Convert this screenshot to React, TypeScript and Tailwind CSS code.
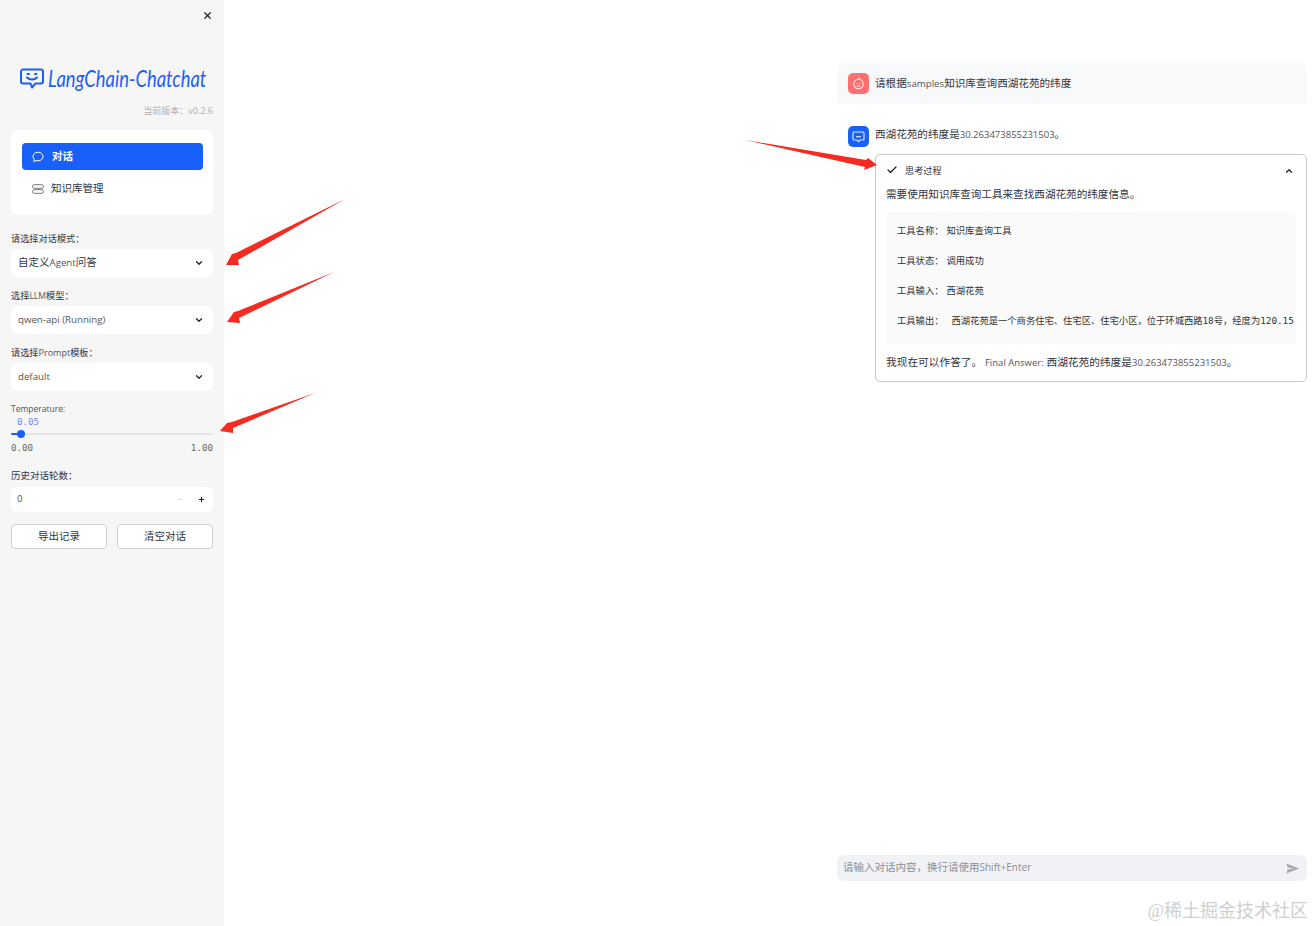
import React from "react";
import { X, Check, ChevronUp, ChevronDown, Plus, Minus } from "lucide-react";

const SANS = "font-['Open_Sans','Noto_Sans_CJK_SC',sans-serif]";
const MONO = "font-['DejaVu_Sans_Mono','Noto_Sans_CJK_SC',monospace]";

function Sel({ label, value, dark }: { label: React.ReactNode; value: React.ReactNode; dark?: boolean }) {
  return (
    <div className="flex flex-col">
      <div className="h-[20px] text-[9.2px] leading-[22px] text-[#31333f]">{label}</div>
      <div className="mt-[1px] flex h-[28px] items-center justify-between rounded-[6px] bg-white pl-[7px] pr-[9px]">
        <span className={dark ? "text-[10.5px] text-[#31333f]" : "text-[9.7px] text-[#555]"}>{value}</span>
        <ChevronDown size={10} strokeWidth={3} className="text-[#222]" />
      </div>
    </div>
  );
}

function ToolLine({ label, children, gap }: { label: string; children: React.ReactNode; gap: string }) {
  return (
    <div className="flex h-[30px] whitespace-pre text-[9.3px] leading-[30px] text-[#333]">
      <span>{label}</span>
      <span className={gap}>{children}</span>
    </div>
  );
}

const Lat = ({ children }: { children: React.ReactNode }) => <span className="text-[9.5px] text-[#555]">{children}</span>;

export default function App() {
  return (
    <div className={`relative flex h-[926px] w-[1313px] overflow-hidden bg-white ${SANS}`}>
      <aside className="flex w-[224px] shrink-0 flex-col bg-[#f6f6f7] px-[11px]">
        <div className="flex justify-end pt-[10px]">
          <X size={11} strokeWidth={2.6} className="text-[#222]" />
        </div>
        <div className="mt-[44px] flex items-center gap-[4px] pl-[9px]">
          <svg className="shrink-0" width="24" height="21" viewBox="0 0 24 21" fill="none" stroke="#1d5ff5" strokeWidth="2">
            <path d="M3 1.500h18a2 2 0 0 1 2 2v10a2 2 0 0 1-2 2h-5.500l-3.500 4-1.500-4H3a2 2 0 0 1-2-2v-10a2 2 0 0 1 2-2z" strokeLinejoin="round" />
            <path d="M7 9.500c2.500 2.500 7.500 2.500 10 0" strokeLinecap="round" />
            <path d="M7.500 6h1.500M15 6h1.500" strokeLinecap="round" />
          </svg>
          <span className="origin-center scale-y-125 whitespace-nowrap font-['Lato',sans-serif] text-[18.4px] italic leading-[26px] text-[#1d5ff5]">LangChain-Chatchat</span>
        </div>
        <div className="mt-[13px] text-right text-[9px] leading-[14px] text-[#b0b0b0]">当前版本：v0.2.6</div>
        <nav className="mt-[12px] flex h-[85px] flex-col rounded-[6px] bg-white pl-[11px] pr-[10px] pt-[13px]">
          <div className="flex h-[27px] items-center gap-[8px] rounded-[4px] bg-[#1960fa] pl-[10px] text-[10.5px] font-bold text-white">
            <svg width="12" height="12" viewBox="0 0 12 12" fill="none" stroke="white" strokeWidth="1">
              <path d="M6 1.200c2.800 0 5 1.900 5 4.300s-2.200 4.300-5 4.300c-.7 0-1.300-.1-1.900-.3L1.800 10.600l.5-2.300C1.500 7.500 1 6.600 1 5.500 1 3.100 3.200 1.200 6 1.200z" />
            </svg>
            <span className="pt-[1px]">对话</span>
          </div>
          <div className="mt-[5px] flex h-[27px] items-center gap-[7px] pl-[10px] text-[10.5px] text-[#31333f]">
            <svg width="12" height="10" viewBox="0 0 12 10" fill="none" stroke="#777" strokeWidth="1">
              <rect x="0.500" y="0.700" width="11" height="3.600" rx="1.800" />
              <rect x="0.500" y="5.700" width="11" height="3.600" rx="1.800" />
            </svg>
            <span className="pt-[1px]">知识库管理</span>
          </div>
        </nav>
        <div className="mt-[13px] flex flex-col gap-[8px]">
          <Sel label="请选择对话模式：" value={<>自定义<span className="text-[9.7px] text-[#555]">Agent</span>问答</>} dark />
          <Sel label={<>选择<span className="text-[8.6px] text-[#555]">LLM</span>模型：</>} value="qwen-api (Running)" />
          <Sel label={<>请选择<span className="text-[9px] text-[#555]">Prompt</span>模板：</>} value="default" />
        </div>
        <div className="mt-[11px] h-[14px] text-[8.5px] leading-[14px] text-[#555]">Temperature:</div>
        <div className={`h-[12px] pl-[6px] text-[9.2px] leading-[12px] text-[#6b8cf5] ${MONO}`}>0.05</div>
        <div className="relative mt-[2px] h-[8px]">
          <div className="absolute left-0 right-0 top-[3px] h-[2px] rounded bg-[#e6e6e8]" />
          <div className="absolute left-0 top-[3px] h-[2px] w-[10px] rounded bg-[#1960fa]" />
          <div className="absolute left-[6px] top-0 h-[8px] w-[8px] rounded-full bg-[#1960fa]" />
        </div>
        <div className={`mt-[3px] flex justify-between text-[9.2px] leading-[14px] text-[#666] ${MONO}`}>
          <span>0.00</span>
          <span>1.00</span>
        </div>
        <div className="mt-[14px] h-[14px] text-[9.5px] leading-[14px] text-[#31333f]">历史对话轮数：</div>
        <div className="mt-[4px] flex h-[25px] items-center justify-between rounded-[6px] bg-white pl-[6px] pr-[8px]">
          <span className="text-[9.5px] text-[#555]">0</span>
          <span className="flex items-center gap-[15px]">
            <Minus size={7} className="text-[#ccc]" />
            <Plus size={7} strokeWidth={4} className="text-[#222]" />
          </span>
        </div>
        <div className="mt-[12px] flex gap-[10px]">
          <button className="h-[25px] w-[96px] rounded-[4px] border border-[#cfcfcf] bg-white text-[10.5px] text-[#31333f]">导出记录</button>
          <button className="h-[25px] w-[96px] rounded-[4px] border border-[#cfcfcf] bg-white text-[10.5px] text-[#31333f]">清空对话</button>
        </div>
      </aside>

      <main className="flex flex-1 flex-col items-end pr-[6px]">
        <div className="flex h-[926px] w-[470px] flex-col">
          <div className="mt-[63px] flex h-[41px] items-center gap-[6px] rounded-[6px] bg-[#f8f9fb] pl-[11px]">
            <div className="flex h-[21px] w-[21px] items-center justify-center rounded-[5px] bg-[#ff6f6f]">
              <svg width="13" height="13" viewBox="0 0 13 13" fill="none" stroke="#ffe9e9" strokeWidth="1.100">
                <circle cx="6.500" cy="7" r="4.800" />
                <circle cx="5" cy="6.500" r="0.600" fill="#ffe9e9" stroke="none" />
                <circle cx="8" cy="6.500" r="0.600" fill="#ffe9e9" stroke="none" />
                <path d="M5 8.700c1 .8 2 .8 3 0M6.500 2.200c0-1 1-1.300 1.500-.8" />
              </svg>
            </div>
            <span className="text-[10.6px] text-[#31333f]">请根据<span className="text-[9.7px] text-[#555]">samples</span>知识库查询西湖花苑的纬度</span>
          </div>

          <div className="mt-[22px] flex gap-[6px] pl-[11px]">
            <div className="flex h-[21px] w-[21px] shrink-0 items-center justify-center rounded-[5px] bg-[#1960fa]">
              <svg width="13" height="12" viewBox="0 0 13 12" fill="none" stroke="#e6eeff" strokeWidth="1.100">
                <path d="M2 1h9a1 1 0 0 1 1 1v6a1 1 0 0 1-1 1H8L6.500 10.600 5 9H2a1 1 0 0 1-1-1V2a1 1 0 0 1 1-1z" />
                <path d="M4 5.700h5" />
              </svg>
            </div>
            <div className="flex min-w-0 flex-1 flex-col">
              <div className="h-[24px] pt-[1px] text-[10.6px] leading-[14px] text-[#31333f]">西湖花苑的纬度是<Lat>30.263473855231503</Lat>。</div>
              <div className="mt-[4px] h-[228px] rounded-[5px] border border-[#c8c8cc] px-[10px]">
                <div className="flex h-[31px] items-center justify-between pr-[2px]">
                  <span className="flex items-center gap-[7px] text-[9.2px] text-[#31333f]">
                    <Check size={12} strokeWidth={2.5} className="text-[#222]" />
                    思考过程
                  </span>
                  <ChevronUp size={10} strokeWidth={3} className="text-[#222]" />
                </div>
                <div className="h-[19px] text-[10.6px] leading-[16px] text-[#31333f]">需要使用知识库查询工具来查找西湖花苑的纬度信息。</div>
                <div className={`mt-[7px] h-[132px] overflow-hidden rounded-[4px] bg-[#fafafa] pl-[11px] pt-[4px] ${MONO}`}>
                  <ToolLine label="工具名称：" gap="ml-[3px]">知识库查询工具</ToolLine>
                  <ToolLine label="工具状态：" gap="ml-[3px]">调用成功</ToolLine>
                  <ToolLine label="工具输入：" gap="ml-[3px]">西湖花苑</ToolLine>
                  <ToolLine label="工具输出：" gap="ml-[8px]">西湖花苑是一个商务住宅、住宅区、住宅小区，位于环城西路18号，经度为120.15</ToolLine>
                </div>
                <div className="mt-[9px] whitespace-nowrap text-[10.7px] leading-[18px] text-[#31333f]">
                  我现在可以作答了。 <Lat>Final Answer:</Lat> 西湖花苑的纬度是<Lat>30.263473855231503</Lat>。
                </div>
              </div>
            </div>
          </div>

          <div className="mt-auto mb-[45px] flex h-[26px] items-center justify-between rounded-[6px] bg-[#f0f2f6] pl-[6px] pr-[8px]">
            <span className="text-[10.5px] text-[#8a8c96]">请输入对话内容，换行请使用<span className="text-[10px]">Shift+Enter</span></span>
            <svg width="13" height="11" viewBox="0 0 13 11" fill="#a8a8ae">
              <path d="M0.500 0.500 13 5.500 0.500 10.500 1.500 6.500 7.500 5.500 1.500 4.500z" />
            </svg>
          </div>
        </div>
      </main>

      <div className="absolute bottom-[2px] right-[5px] font-['Liberation_Serif','Noto_Sans_CJK_SC',serif] text-[18px] leading-[26px] text-[#cfcfcf]">@稀土掘金技术社区</div>

      <svg className="pointer-events-none absolute left-0 top-0" width="1313" height="926" viewBox="0 0 1313 926">
        <path d="M345 199 236 253 232 254 226 265 239 265 238 260z" fill="#f52a20" />
        <path d="M334 272 238 311 234 312 227 322 240 323 239 318z" fill="#f52a20" />
        <path d="M315 393 232 422 227 423 220 431 233 433 233 428z" fill="#f52a20" />
        <path d="M745 140 866 160 868 158 877 165 864 170 865 167z" fill="#f52a20" />
      </svg>
    </div>
  );
}
